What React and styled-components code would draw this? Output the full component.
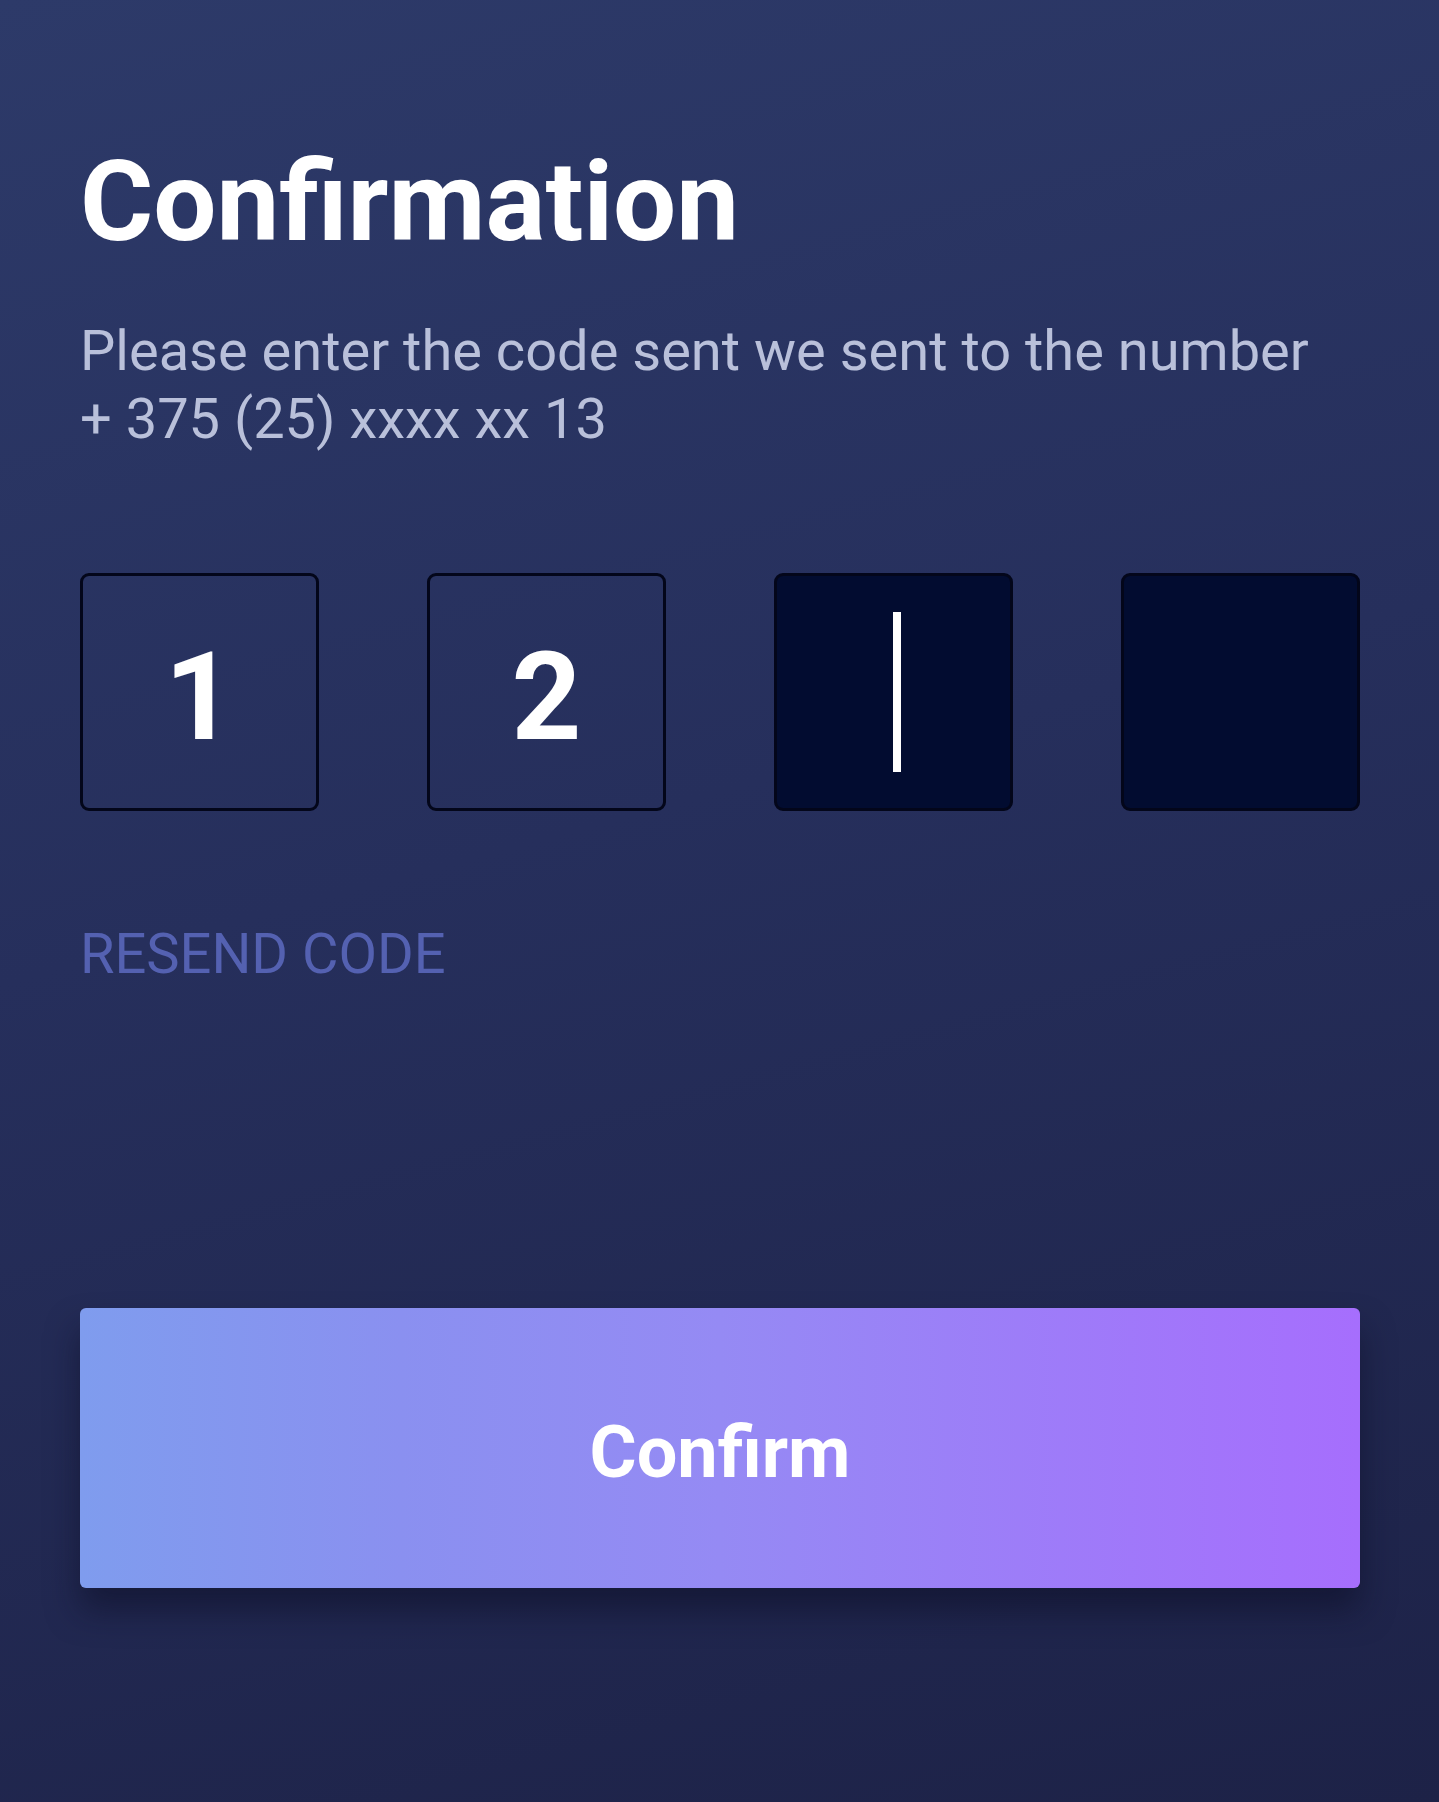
import styled, { createGlobalStyle } from 'styled-components';

const GlobalStyle = createGlobalStyle`
  html, body {
    margin: 0;
    padding: 0;
  }
  body {
    font-family: Roboto, "Liberation Sans", sans-serif;
    background: #242c57;
  }
`;

const code = ['1', '2', '', ''];
const activeIndex = 2;

export default function App() {
  return (
    <>
      <GlobalStyle />
      <Screen>
        <Title>Confirmation</Title>
        <Subtitle>
          Please enter the code sent we sent to the number
          <br />+ 375 (25) xxxx xx 13
        </Subtitle>
        <CodeRow>
          {code.map((digit, idx) => (
            <CodeCell key={idx} $filled={Boolean(digit)}>
              {digit}
              {idx === activeIndex && <Caret />}
            </CodeCell>
          ))}
        </CodeRow>
        <ResendLink>RESEND CODE</ResendLink>
        <ConfirmButton>Confirm</ConfirmButton>
      </Screen>
    </>
  );
}

const Screen = styled.div`
  box-sizing: border-box;
  width: 1439px;
  height: 1802px;
  padding: 146px 79px 0 80px;
  background: linear-gradient(165deg, #2d3a69 0%, #262f5c 45%, #1d2247 100%);

  display: flex;
  flex-direction: column;
`;

const Title = styled.h1`
  margin: 0;
  font-size: 112px;
  line-height: 1;
  font-weight: 700;
  color: #ffffff;
  letter-spacing: 0;
`;

const Subtitle = styled.p`
  margin: 59px 0 0;
  font-size: 56px;
  line-height: 68px;
  font-weight: 400;
  color: #b9c0da;
`;

const CodeRow = styled.div`
  margin-top: 120px;
  display: flex;
  justify-content: space-between;
`;

const CodeCell = styled.div`
  box-sizing: border-box;
  width: 239px;
  height: 238px;
  padding-top: ${({ $filled }) => ($filled ? '12px' : '0')};
  border: 3px solid #03061a;
  border-radius: 9px;
  background: ${({ $filled }) => ($filled ? 'transparent' : '#020c30')};

  display: flex;
  align-items: center;
  justify-content: center;

  font-size: 122px;
  font-weight: 700;
  color: #ffffff;
  line-height: 1;
`;

const Caret = styled.span`
  display: block;
  width: 8px;
  height: 160px;
  margin-left: 7px;
  background: #ffffff;
`;

const ResendLink = styled.a`
  margin-top: 115px;
  font-size: 56px;
  line-height: 1;
  font-weight: 400;
  color: #5461b1;
  cursor: pointer;
  align-self: flex-start;
`;

const ConfirmButton = styled.button`
  margin-top: 326px;
  height: 280px;
  width: 100%;
  padding-top: 10px;
  border: none;
  border-radius: 6px;
  background: linear-gradient(90deg, #7f9cee 0%, #8a90f0 25%, #958af4 50%, #a66efd 100%);
  box-shadow: 0 22px 32px rgba(12, 14, 38, 0.55);

  font-family: Roboto, "Liberation Sans", sans-serif;
  font-size: 72px;
  font-weight: 700;
  color: #ffffff;
  cursor: pointer;
`;
